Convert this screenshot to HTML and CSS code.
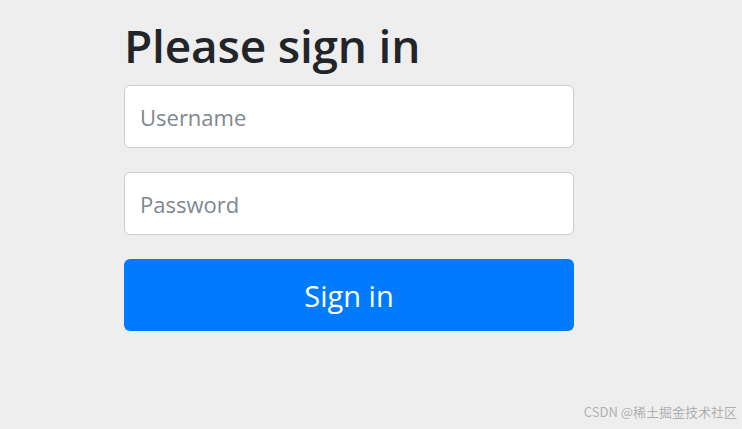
FILE: index.html
```html
<!DOCTYPE html>
<html lang="en">
<head>
<meta charset="utf-8">
<title>Please sign in</title>
<link rel="stylesheet" href="styles.css">
</head>
<body>
<div class="container">
  <form class="form-signin">
    <h2 class="heading">Please sign in</h2>
    <input class="field" type="text" placeholder="Username">
    <input class="field" type="password" placeholder="Password">
    <button class="btn" type="button">Sign in</button>
  </form>
</div>
<div class="watermark">CSDN @稀土掘金技术社区</div>
</body>
</html>
```
FILE: styles.css
```css
html, body {
  margin: 0;
  padding: 0;
  background: #eeeeee;
  font-family: "Open Sans", "Noto Sans", sans-serif;
  height: 100%;
  overflow: hidden;
}
.container {
  padding-left: 124px;
  padding-top: 15px;
}
.form-signin {
  width: 450px;
  display: flex;
  flex-direction: column;
}
.heading {
  margin: 0 0 10px 0;
  font-weight: 600;
  font-size: 46px;
  line-height: 60px;
  color: #212529;
  letter-spacing: -0.2px;
}
.field {
  box-sizing: border-box;
  height: 63px;
  margin: 0 0 24px 0;
  padding: 0 15px;
  border: 1px solid #cccccc;
  border-radius: 6px;
  background: #ffffff;
  font-family: inherit;
  font-size: 22px;
  color: #495057;
}
.field::placeholder {
  color: #80878e;
}
.btn {
  height: 72px;
  border: none;
  border-radius: 6px;
  background: #007bff;
  color: #ffffff;
  font-family: inherit;
  font-size: 29px;
  padding: 0;
}
.watermark {
  position: absolute;
  right: 5px;
  bottom: 8px;
  white-space: nowrap;
  color: rgba(120, 120, 120, 0.55);
  font-family: "Noto Sans CJK SC", sans-serif;
  font-size: 13px;
}
```
